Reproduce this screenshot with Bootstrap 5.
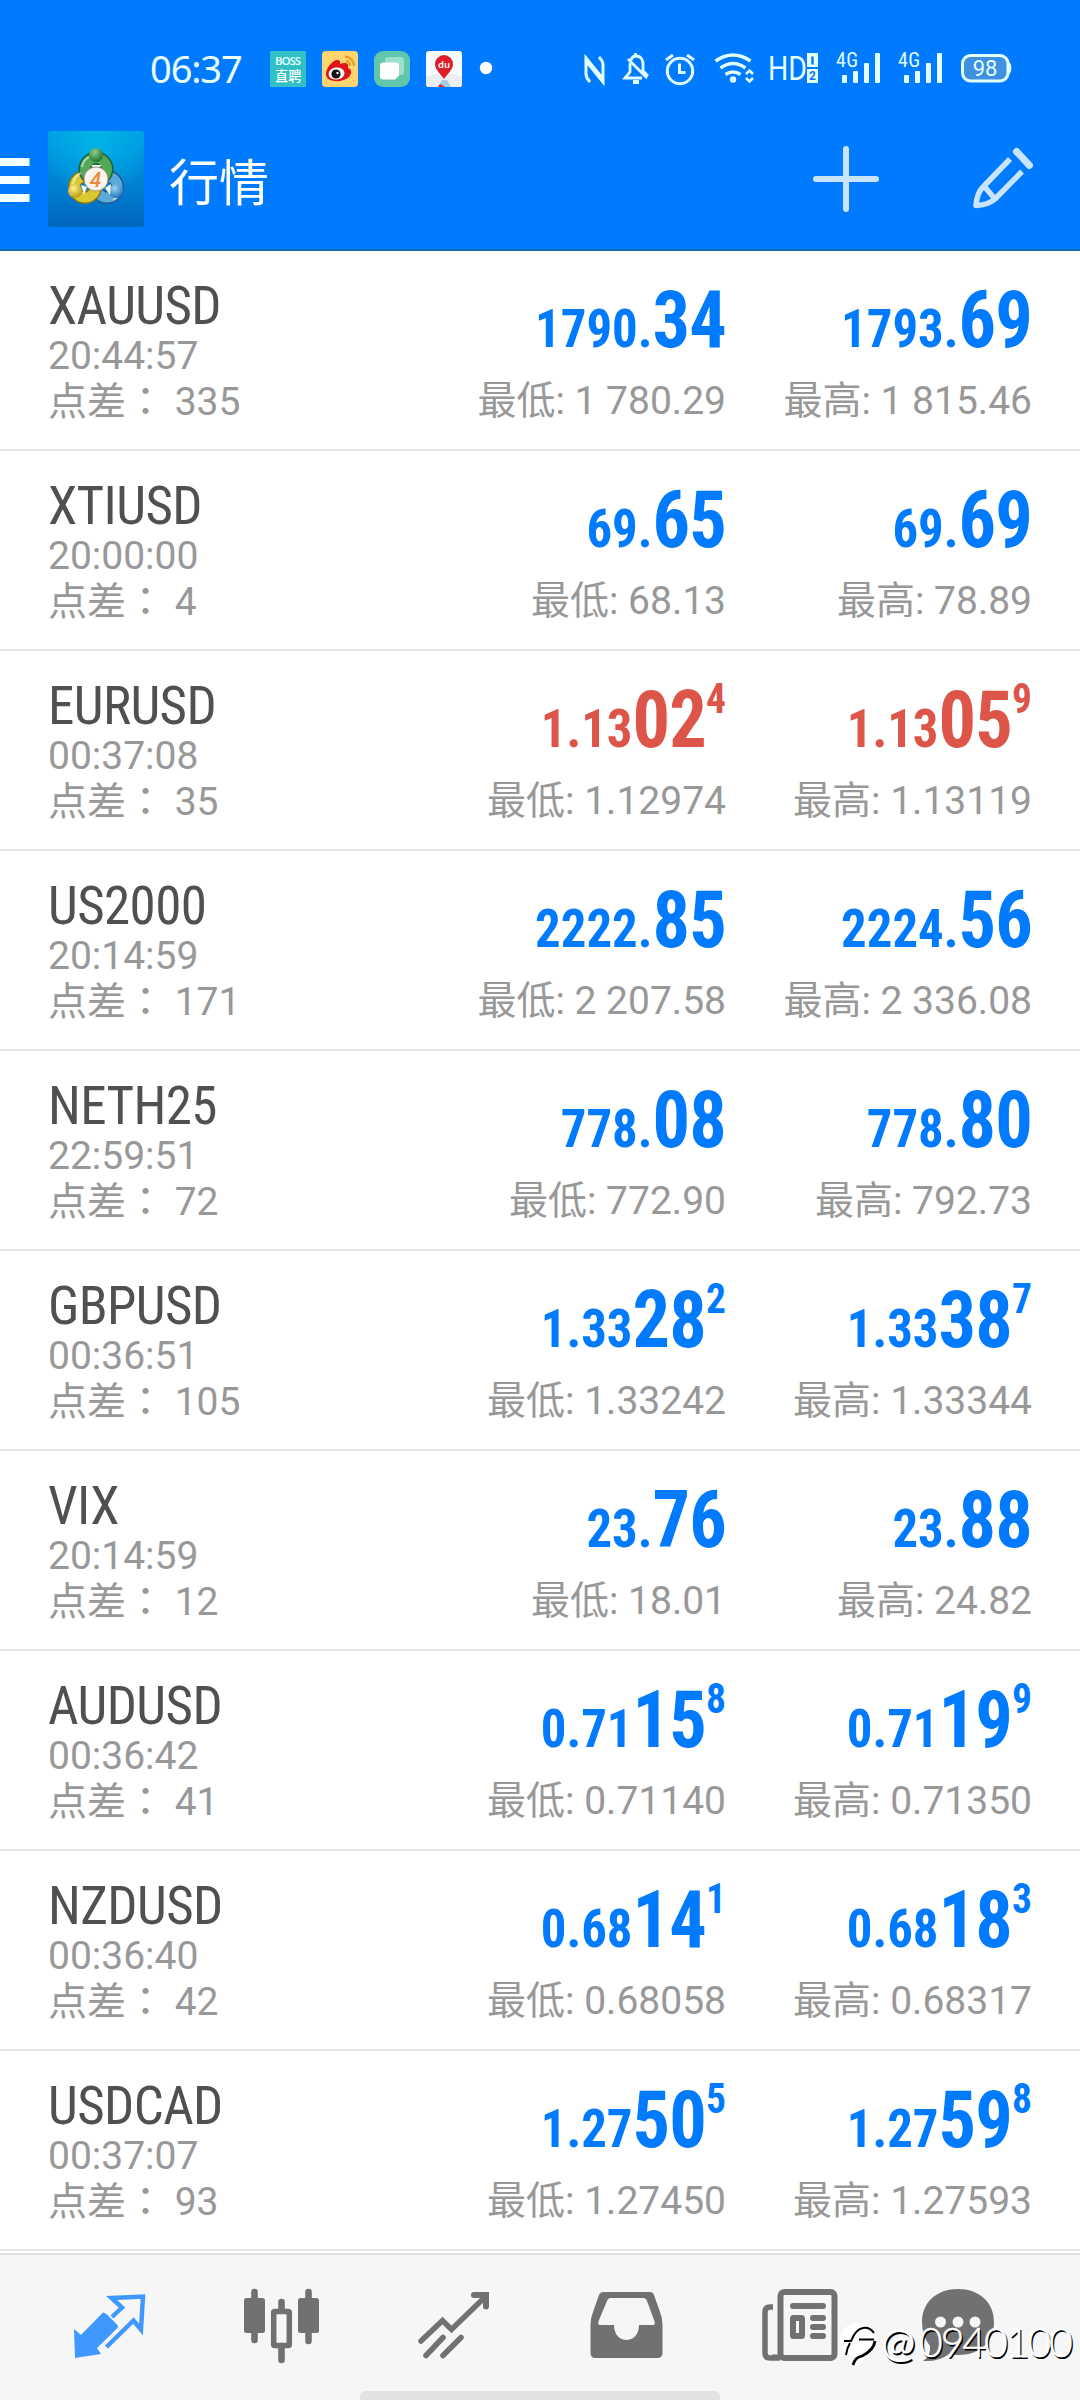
<!DOCTYPE html>
<html lang="zh-CN">
<head>
<meta charset="utf-8">
<meta name="viewport" content="width=device-width, initial-scale=1">
<title>行情</title>
<link href="https://cdn.jsdelivr.net/npm/bootstrap@5.3.0/dist/css/bootstrap.min.css" rel="stylesheet">
<style>
  body { font-family: Roboto, "Noto Sans CJK SC", sans-serif; width: 1080px; height: 2400px; overflow: hidden; }
  svg { display: block; flex: none; }
  .top-area { background: #007aff; height: 251px; border-bottom: 2px solid #1a69b4; color: #fff; }
  .status-line { height: 112px; padding: 46px 0 0 150px; }
  .clock { width: 120px; font: 400 38px/44px "Noto Sans", sans-serif; letter-spacing: -1.1px; color: #eaffff; }
  .title-line { height: 134px; }
  .title-text { font: 370 50px/72px "Noto Sans CJK SC", sans-serif; margin-left: 24px; width: 623px; }
  .quote { height: 200px; padding: 27px 48px 0 48px; border-bottom: 2px solid #e4e4e4; }
  .sym { font: 400 53px/56px "Roboto Condensed", Roboto, sans-serif; letter-spacing: -.6px; color: #505050; }
  .meta { font-size: 39px; line-height: 45px; height: 45px; font-weight: 375; color: #989898; white-space: nowrap; }
  .wide-colon { font-family: "Noto Sans CJK TC", sans-serif; line-height: 1; }
  .side { width: 306px; }
  .price { font-family: "Roboto Condensed", Roboto, sans-serif; font-weight: 700; line-height: 84px; height: 84px; margin-bottom: 17px; color: #007aff; white-space: nowrap; transform: scaleX(.94); transform-origin: right; }
  .price.down { color: #dc5548; }
  .px-s { font-size: 54px; }
  .px-l { font-size: 79px; letter-spacing: -.8px; }
  .px-t { font-size: 42px; line-height: 40px; align-self: flex-start; margin-top: 1px; }
  .tabs { height: 147px; margin-top: 2px; background: #f6f6f6; border-top: 2px solid #e0e0e0; padding: 1px 0 0 24px; position: relative; }
  .home-bar { position: absolute; left: 360px; bottom: 0; width: 360px; height: 9px; border-radius: 6px 6px 0 0; background: #e2e2e2; }
  .stamp { position: absolute; right: 6px; top: 59px; height: 60px; color: #fff; font: 300 41px/56px Lato, sans-serif; text-shadow: 1.5px 1.5px 0 #000; white-space: nowrap; }
  .stamp-at { font-weight: 400; width: 38px; }
  .stamp-id { letter-spacing: -2.1px; -webkit-text-stroke: .5px #fff; width: 155px; }
</style>
<script src="https://cdn.jsdelivr.net/npm/bootstrap@5.3.0/dist/js/bootstrap.bundle.min.js"></script>
</head>
<body class="bg-white m-0">
<header class="top-area">
  <div class="status-line d-flex">
    <div class="clock">06:37</div>
    <svg width="52" height="44" viewBox="270 46 52 44"><rect x="270" y="51" width="36" height="36" rx="1" fill="#30c0c6"/><text x="275" y="65" font-family="Noto Sans" font-weight="600" font-size="11.5" fill="#dffcf8" textLength="26">BOSS</text><text x="275" y="81" font-family="Noto Sans CJK SC" font-weight="500" font-size="13.2" fill="#fff">直聘</text></svg>
    <svg width="52" height="44" viewBox="322 46 52 44"><rect x="322" y="51" width="36" height="36" rx="4" fill="#ffd56f"/><path d="M326 74c0-7 8-15 12-14 3 0 2 4 2 4 6-2 9-1 8 4 4 1 4 6 1 9-6 6-23 6-23-3z" fill="#e01318"/><ellipse cx="336.500" cy="73.500" rx="8" ry="6" fill="#fff" transform="rotate(-8 336.500 73.500)"/><circle cx="336" cy="74" r="4.600" fill="#111"/><circle cx="337.500" cy="73" r="1.200" fill="#fff"/><path d="M346 61a5 5 0 0 1 4 5M345 56.500a9.500 9.500 0 0 1 9 9.500" fill="none" stroke="#e4a32c" stroke-width="2.500"/></svg>
    <svg width="52" height="44" viewBox="374 46 52 44"><rect x="374" y="51" width="36" height="36" rx="9" fill="#60c6ac"/><rect x="385" y="57" width="19" height="18" rx="3" fill="#9edfcd"/><path d="M383 62.500h13a3 3 0 0 1 3 3v10l-4 4h-12a3 3 0 0 1-3-3v-11a3 3 0 0 1 3-3z" fill="#fff"/></svg>
    <svg width="80" height="44" viewBox="426 46 80 44"><rect x="426" y="51" width="36" height="36" rx="3" fill="#f6fbfd"/><path d="M426 77l10-3 18 0 8 3v7a3 3 0 0 1-3 3h-30a3 3 0 0 1-3-3z" fill="#eceef2"/><path d="M438 87l4-7h5l4 7z" fill="#a8cbe0"/><path d="M438 87l2-3 5 3z" fill="#d9242c"/><path d="M444 79c-3-5-9-9-9-15a9 9 0 0 1 18 0c0 6-6 10-9 15z" fill="#de1f28"/><text x="444" y="68" text-anchor="middle" font-family="Noto Sans" font-weight="600" font-size="9.500" fill="#fff">du</text><circle cx="486" cy="68" r="6.200" fill="#fff"/></svg>
    <svg class="ms-auto" width="40" height="44" viewBox="578 46 40 44" fill="none" stroke="#e2ffff" stroke-width="3"><path d="M590 82q-4-4-4-8V58l17 21M599 57q4 4 4 8V82L586 61"/></svg>
    <svg width="40" height="44" viewBox="618 46 40 44" fill="none" stroke="#e2ffff" stroke-width="2.800"><path d="M628 59l19 19M630 63v9l-5 6h17M631 60c1-3 3-4 5-4 5 0 7 4 7 8v7l5 5M635.500 53v3"/><path d="M633 82h6" stroke-width="4"/></svg>
    <svg width="49" height="44" viewBox="658 46 49 44" fill="none" stroke="#e2ffff" stroke-width="3"><circle cx="680" cy="71" r="12.700"/><path d="M679.500 63.500V72.500h6M666 60l7-5M694 60l-7-5"/></svg>
    <svg width="56" height="44" viewBox="707 46 56 44" fill="none" stroke="#e2ffff" stroke-width="3.400"><path d="M715.500 61q17.500-12 35 0M720.500 68q12.500-9 25 0M725.500 74.500q7.500-5 15 0"/><circle cx="733" cy="79.500" r="3.200" fill="#e2ffff" stroke="none"/><path d="M746 74l3.500-3.500 3.500 3.500M746 78l3.500 3.500 3.500-3.500" stroke-width="2.500"/></svg>
    <svg width="67" height="44" viewBox="763 46 67 44"><text x="768" y="80" font-family="Roboto" font-size="34" fill="#e2ffff" textLength="39" lengthAdjust="spacingAndGlyphs">HD</text><path d="M807 53h11v14h-11zM807 69h11v14h-11z" fill="#e2ffff"/><path d="M812.500 56.500v8" stroke="#1577e0" stroke-width="2.500"/><text x="812.500" y="80" text-anchor="middle" font-family="Roboto" font-weight="700" font-size="12" fill="#1577e0">2</text></svg>
    <svg width="62" height="44" viewBox="830 46 62 44" fill="#e2ffff"><text x="836" y="67" font-family="Roboto Condensed" font-size="20" textLength="22">4G</text><rect x="842" y="75" width="5" height="8" rx="1"/><rect x="853" y="71" width="5" height="12" rx="1"/><rect x="864" y="63" width="5" height="20" rx="1"/><rect x="875" y="53" width="5" height="30" rx="1"/></svg>
    <svg width="62" height="44" viewBox="892 46 62 44" fill="#e2ffff"><text x="898" y="67" font-family="Roboto Condensed" font-size="20" textLength="22">4G</text><rect x="904" y="75" width="5" height="8" rx="1"/><rect x="915" y="71" width="5" height="12" rx="1"/><rect x="926" y="63" width="5" height="20" rx="1"/><rect x="937" y="53" width="5" height="30" rx="1"/></svg>
    <svg width="126" height="44" viewBox="954 46 126 44"><rect x="962.500" y="55.500" width="45.500" height="25.500" rx="8" fill="#3f90e0" stroke="#e2ffff" stroke-width="3"/><path d="M1009 63q3 5 0 10z" fill="#e2ffff" stroke="#e2ffff" stroke-width="2"/><text x="985" y="76" text-anchor="middle" font-family="Roboto" font-size="22" fill="#e2ffff">98</text></svg>
  </div>
  <div class="title-line d-flex align-items-center">
    <svg width="48" height="96" viewBox="0 132 48 96"><path d="M0 159h29.500v8H0zM0 177h29.500v8H0zM0 195h29.500v8H0z" fill="#f2ffff"/></svg>
    <svg width="97" height="96" viewBox="48 131 97 96">
      <defs>
        <linearGradient id="tile" x1="0" y1="0" x2="0" y2="1"><stop offset="0" stop-color="#009fe2"/><stop offset=".5" stop-color="#0083d4"/><stop offset="1" stop-color="#0067bd"/></linearGradient>
        <radialGradient id="glow" cx=".5" cy=".1" r=".6"><stop offset="0" stop-color="#00b4e8"/><stop offset="1" stop-color="#00b4e8" stop-opacity="0"/></radialGradient>
        <radialGradient id="gr" cx=".4" cy=".3" r=".7"><stop offset="0" stop-color="#8fd08a"/><stop offset="1" stop-color="#1f7434"/></radialGradient>
        <radialGradient id="ye" cx=".4" cy=".3" r=".7"><stop offset="0" stop-color="#fff08a"/><stop offset="1" stop-color="#b99a14"/></radialGradient>
        <radialGradient id="bl" cx=".4" cy=".3" r=".7"><stop offset="0" stop-color="#9bd6f7"/><stop offset="1" stop-color="#2474b8"/></radialGradient>
      </defs>
      <rect x="48" y="131" width="96" height="96" rx="3" fill="url(#tile)"/><rect x="48" y="131" width="96" height="96" rx="3" fill="url(#glow)"/>
      <g fill="none" stroke-width="10"><circle cx="107" cy="187" r="10.500" stroke="#22588c" stroke-width="13"/><circle cx="107" cy="187" r="10.500" stroke="#5aaadb"/><circle cx="85" cy="187" r="10.500" stroke="#7b7720" stroke-width="13"/><circle cx="85" cy="187" r="10.500" stroke="#dbc831"/><circle cx="96" cy="169" r="11" stroke="#245f38" stroke-width="13"/><circle cx="96" cy="169" r="11" stroke="#55a855"/><path d="M82 167a14 14 0 0 1 7-10M73 184a14 14 0 0 1 8-11M113 200a14 14 0 0 0 8-11" stroke="#fff" stroke-opacity=".55" stroke-width="2"/></g>
      <circle cx="96" cy="155" r="7" fill="url(#gr)"/><circle cx="75" cy="191" r="7" fill="url(#ye)"/><circle cx="116" cy="191" r="7" fill="url(#bl)"/>
      <path d="M91 165l5 5 6-5zM81 185l6 2-3 8zM111 184l-6 4 5 7z" fill="#f4f4e8"/>
      <circle cx="96" cy="179" r="12" fill="#f7f3ee" stroke="#9a8a70" stroke-width=".8"/>
      <text x="95.500" y="186.500" text-anchor="middle" font-family="Roboto" font-style="italic" font-weight="500" font-size="21" fill="#ee8a3c">4</text>
    </svg>
    <div class="title-text">行情</div>
    <svg width="108" height="80" viewBox="792 139 108 80"><path d="M816 179h60M846 149v60" stroke="#c8e4ff" stroke-width="6" stroke-linecap="round"/></svg>
    <svg class="ms-auto me-4" width="90" height="80" viewBox="966 139 90 80" fill="none" stroke="#c8e4ff" stroke-width="5.500" stroke-linejoin="round"><path d="M1010 159L984 186Q977 192 976 205.500Q988 205 995 199L1022 171.500M984 186l11 13"/><path d="M1016.500 151.500l13 14" stroke-width="7" stroke-linecap="round"/></svg>
  </div>
</header>
<main id="quotes"></main>
<nav class="tabs d-flex">
  <svg width="172" height="136" viewBox="24 2256 172 136"><path d="M74 2329l7 6 22-22.500q2 0 5 3l9 9q2 2 0 4L97 2348l4 6-26 4z" fill="#3f98ff"/><path d="M112 2317l10-9.500-10.500-9.500 31.500-1.500-2 33-7.500-9L106.500 2347" fill="none" stroke="#3f98ff" stroke-width="4.400"/></svg>
  <svg width="172" height="136" viewBox="196 2256 172 136" fill="#717171"><rect x="244" y="2298" width="21" height="35" rx="2.500"/><rect x="298" y="2298" width="21" height="35" rx="2.500"/><path d="M254.500 2292v48M308.500 2292v49M281.500 2302v8M281.500 2346v14" stroke="#717171" stroke-width="6.600" stroke-linecap="round"/><rect x="273.700" y="2311.500" width="15.600" height="34" rx="1" fill="none" stroke="#717171" stroke-width="5.500"/></svg>
  <svg width="173" height="136" viewBox="368 2256 173 136" fill="none" stroke="#717171" stroke-width="5.500" stroke-linecap="round"><path d="M421 2341l21.500-20.500 9 9L484 2298M426 2355.500l17-18M443 2355.500l18-18"/><path d="M474 2295h12v11.500" stroke-width="6"/></svg>
  <svg width="173" height="136" viewBox="541 2256 173 136"><path fill-rule="evenodd" fill="#717171" d="M604 2292H650q3 0 4 3l6 17q2.500 6 2.500 13v28q0 5-5 5h-62q-5 0-5-5v-28q0-7 2.500-13l6-17q1-3 5-3zM611 2298q-3 0-4 3l-8 19q-2 5 1 5h14c0 20 25 20 25 0h14q3 0 1-5l-7-19q-1-3-4-3z"/></svg>
  <svg width="172" height="136" viewBox="714 2256 172 136" fill="none" stroke="#717171"><rect x="780.500" y="2292" width="54" height="66" rx="4" stroke-width="6"/><path d="M773 2307h-3q-5 0-5 5v41q0 5 5 5h10" stroke-width="5.500"/><path d="M772 2357h6" stroke-width="5"/><path d="M793 2306h30M813 2318h10M813 2327h10M813 2336h10" stroke-width="6" stroke-linecap="round"/><rect x="793" y="2318" width="9" height="18" rx=".5" stroke-width="6"/></svg>
  <svg width="172" height="136" viewBox="886 2256 172 136"><path d="M958 2289c21 0 36 13 36 33s-14 33-36 33q-5 0-9-1-10 8-26 7 8-5 7-15-8-10-8-24c0-20 15-33 36-33z" fill="#717171"/><circle cx="940.500" cy="2322" r="5.500" fill="#f6f6f6"/><circle cx="958" cy="2322" r="5.500" fill="#f6f6f6"/><circle cx="975" cy="2322" r="5.500" fill="#f6f6f6"/></svg>
  <div class="home-bar"></div>
  <div class="stamp d-flex">
    <svg width="51" height="60" viewBox="830 2313 51 60">
      <circle cx="857" cy="2339" r="17" fill="#fff"/><path d="M856 2352h15l-16 14z" fill="#fff"/>
      <g fill="none" stroke="#000" stroke-width="2"><path d="M844 2340h7q5-12 12-13 7-1 11 5M859 2338.500h15M850 2342q-3 5-4 12"/><path d="M875 2340c-1 8-7 12-13 15-5 1-7 3-9 9" stroke-width="2.800"/></g>
    </svg>
    <span class="stamp-at">@</span><span class="stamp-id">0940100</span>
  </div>
</nav>
<script>
  // symbol, time, spread, [bid small, large, tip], low, [ask small, large, tip], high, falling
  const quotes = [
    ["XAUUSD", "20:44:57", 335, ["1790.", "34"], "1 780.29", ["1793.", "69"], "1 815.46"],
    ["XTIUSD", "20:00:00", 4, ["69.", "65"], "68.13", ["69.", "69"], "78.89"],
    ["EURUSD", "00:37:08", 35, ["1.13", "02", "4"], "1.12974", ["1.13", "05", "9"], "1.13119", true],
    ["US2000", "20:14:59", 171, ["2222.", "85"], "2 207.58", ["2224.", "56"], "2 336.08"],
    ["NETH25", "22:59:51", 72, ["778.", "08"], "772.90", ["778.", "80"], "792.73"],
    ["GBPUSD", "00:36:51", 105, ["1.33", "28", "2"], "1.33242", ["1.33", "38", "7"], "1.33344"],
    ["VIX", "20:14:59", 12, ["23.", "76"], "18.01", ["23.", "88"], "24.82"],
    ["AUDUSD", "00:36:42", 41, ["0.71", "15", "8"], "0.71140", ["0.71", "19", "9"], "0.71350"],
    ["NZDUSD", "00:36:40", 42, ["0.68", "14", "1"], "0.68058", ["0.68", "18", "3"], "0.68317"],
    ["USDCAD", "00:37:07", 93, ["1.27", "50", "5"], "1.27450", ["1.27", "59", "8"], "1.27593"]
  ];
  const side = (p, label, value, down) => `
    <div class="side text-end">
      <div class="price d-flex justify-content-end align-items-baseline ${down ? "down" : ""}"><span class="px-s">${p[0]}</span><span class="px-l">${p[1]}</span>${p[2] ? `<span class="px-t">${p[2]}</span>` : ""}</div>
      <div class="meta">${label}: ${value}</div>
    </div>`;
  document.getElementById("quotes").innerHTML = quotes.map(q => `
    <section class="quote d-flex">
      <div class="flex-grow-1">
        <div class="sym">${q[0]}</div>
        <div class="meta">${q[1]}</div>
        <div class="meta">点差<span class="wide-colon" lang="zh-TW">：</span> ${q[2]}</div>
      </div>
      ${side(q[3], "最低", q[4], q[7])}${side(q[5], "最高", q[6], q[7])}
    </section>`).join("");
</script>
</body>
</html>
